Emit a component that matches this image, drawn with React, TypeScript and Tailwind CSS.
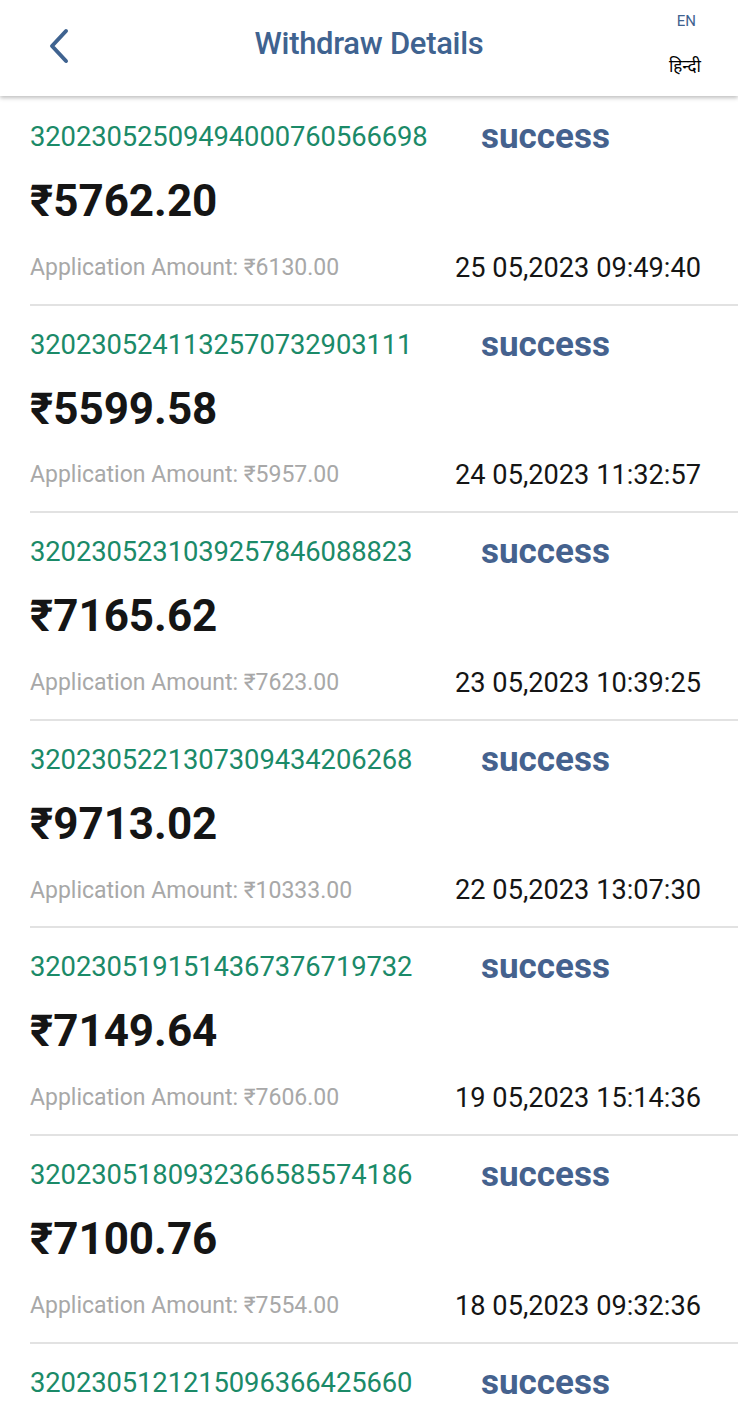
import React from "react";

const rows = [
  ["32023052509494000760566698", "₹5762.20", "₹6130.00", "25 05,2023 09:49:40"],
  ["32023052411325707329031 11".replace(" ", ""), "₹5599.58", "₹5957.00", "24 05,2023 11:32:57"],
  ["32023052310392578460888 23".replace(" ", ""), "₹7165.62", "₹7623.00", "23 05,2023 10:39:25"],
  ["32023052213073094342062 68".replace(" ", ""), "₹9713.02", "₹10333.00", "22 05,2023 13:07:30"],
  ["32023051915143673767197 32".replace(" ", ""), "₹7149.64", "₹7606.00", "19 05,2023 15:14:36"],
  ["32023051809323665855741 86".replace(" ", ""), "₹7100.76", "₹7554.00", "18 05,2023 09:32:36"],
  ["32023051212150963664256 60".replace(" ", ""), "₹7100.76", "₹7554.00", "18 05,2023 09:32:36"],
];

export default function App() {
  return (
    <div className="w-[738px] h-[1413px] overflow-hidden bg-white" style={{ fontFamily: "Roboto, 'Noto Sans', sans-serif" }}>
      <header className="relative z-10 h-[96px] bg-white shadow-[0_2px_4px_rgba(0,0,0,0.25)] flex items-center">
        <div className="w-[120px] pl-[46px] flex items-center -mt-[4px]">
          <svg width="26" height="38" viewBox="0 0 26 38" fill="none">
            <path d="M20 4 L6 19 L20 34" stroke="#3f6390" strokeWidth="4" strokeLinecap="round" strokeLinejoin="round" />
          </svg>
        </div>
        <div className="flex-1 text-center text-[31px] font-medium text-[#3f6390] tracking-[-0.3px] -mt-[8px]">Withdraw Details</div>
        <div className="w-[120px] flex flex-col items-end pr-[37px] gap-[24px] -mt-[8px]">
          <span className="text-[15px] text-[#3f6390] leading-[20px] pr-[5px]">EN</span>
          <span className="text-[17px] text-black leading-[22px]" style={{ fontFamily: "'Noto Sans', sans-serif" }}>हिन्दी</span>
        </div>
      </header>
      <div className="pl-[30px] pt-[2px]">
        {rows.map((r, i) => (
          <div key={i} className="border-b-2 border-[#e2e2e2] pt-[24px] pb-[20.6px] pr-[37px]">
            <div className="flex items-center h-[30px]">
              <span className="w-[451px] text-[27.4px] text-[#1b8a68] leading-[30px] tracking-[-0.1px]">{r[0]}</span>
              <span className="text-[35px] font-bold text-[#45628e] leading-[30px]">success</span>
            </div>
            <div className="mt-[24px] h-[50px] text-[44px] font-bold text-[#151515] leading-[50px]">{r[1]}</div>
            <div className="mt-[27px] flex items-center justify-between h-[30px]">
              <span className="text-[23px] text-[#a8a8a8]">Application Amount: {r[2]}</span>
              <span className="text-[27.2px] text-[#151515]">{r[3]}</span>
            </div>
          </div>
        ))}
      </div>
    </div>
  );
}
